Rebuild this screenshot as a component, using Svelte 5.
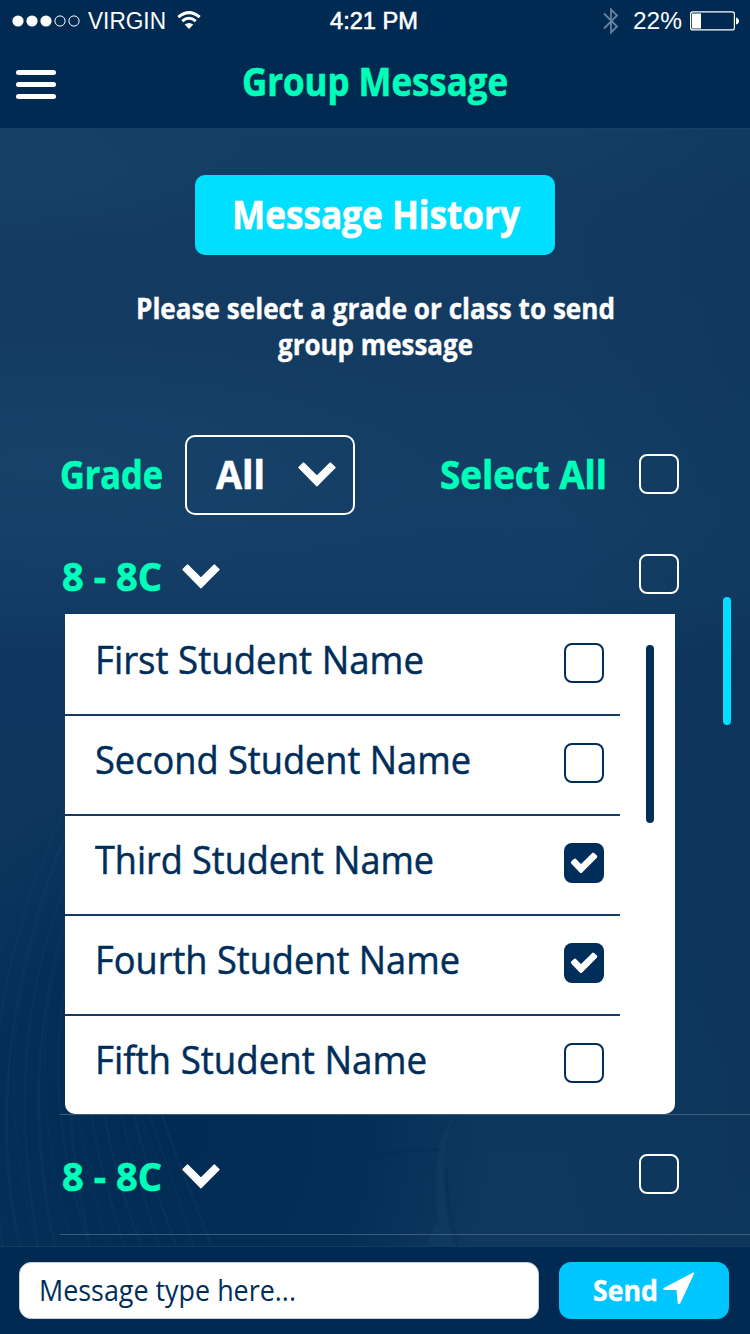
<script>
  let students = $state([
    { name: 'First Student Name', width: 329, checked: false },
    { name: 'Second Student Name', width: 376, checked: false },
    { name: 'Third Student Name', width: 339, checked: true },
    { name: 'Fourth Student Name', width: 365, checked: true },
    { name: 'Fifth Student Name', width: 332, checked: false }
  ]);
  const strands = Array.from({ length: 18 }, (_, i) => i);
</script>

{#snippet label(text, width, kind)}
  <svg class="label {kind}" style:width="{width}px" role="img" aria-label={text}>
    <text x="0" y={kind.includes('small') ? 24 : 30} textLength={width} lengthAdjust="spacingAndGlyphs">{text}</text>
  </svg>
{/snippet}

{#snippet chevron()}
  <svg class="chevron" viewBox="0 0 38 25" width="38" height="25">
    <path d="M5.5 1 1 5.4 18.9 23.8 37 5.4 32.3 1 18.9 14.2Z" fill="#fff" stroke="#fff" stroke-width="1.4" stroke-linejoin="round" />
  </svg>
{/snippet}

{#snippet groupRow(extra)}
  <div class="group-row {extra}">
    {@render label('8 - 8C', 100, 'bold')}
    {@render chevron()}
    <button class="box light" aria-label="Select class"></button>
  </div>
{/snippet}

<div class="screen">
  <header>
    <div class="status">
      <svg class="signal" viewBox="0 0 68 12" width="68" height="12">
        <g fill="#fff"><circle cx="6" cy="6" r="5.6" /><circle cx="20" cy="6" r="5.6" /><circle cx="34" cy="6" r="5.6" /></g>
        <g fill="none" stroke="#fff"><circle cx="48" cy="6" r="5.1" /><circle cx="62" cy="6" r="5.1" /></g>
      </svg>
      <svg class="stat carrier" width="78" height="26"><text y="21" textLength="78" lengthAdjust="spacingAndGlyphs">VIRGIN</text></svg>
      <svg class="wifi" viewBox="0 0 24 19" width="24" height="19">
        <g fill="none" stroke="#fff" stroke-width="3">
          <path d="M1.3 6.2Q12-3 22.7 6.2" /><path d="M5.2 10.2Q12 4.4 18.8 10.2" />
        </g>
        <path d="M7.7 13.6Q12 10.2 16.3 13.6L12 18Z" fill="#fff" />
      </svg>
      <svg class="stat time" width="88" height="26"><text y="21" textLength="88" lengthAdjust="spacingAndGlyphs">4:21 PM</text></svg>
      <svg class="bluetooth" viewBox="0 0 16 28" width="16" height="28">
        <path d="M1 6.5 14 19.5 8 25.5V2.5L14 8.5 1 21.5" fill="none" stroke="#6a829b" stroke-width="1.8" />
      </svg>
      <svg class="stat percent" width="49" height="26"><text y="21" textLength="49" lengthAdjust="spacingAndGlyphs">22%</text></svg>
      <svg class="battery" viewBox="0 0 50 20" width="50" height="20">
        <rect x=".6" y=".9" width="43.8" height="18" rx="2.2" fill="none" stroke="#fff" stroke-width="1.2" />
        <rect x="2" y="2.5" width="9" height="15" fill="#fff" />
        <path d="M46 6.5Q49 7.5 49 10T46 13.5Z" fill="#fff" />
      </svg>
    </div>
    <div class="nav">
      <button class="menu" aria-label="Menu"><i></i><i></i><i></i></button>
      <h1>{@render label('Group Message', 266, 'bold')}</h1>
    </div>
  </header>

  <main>
    <svg class="backdrop" viewBox="0 0 750 1117" width="750" height="1117" aria-hidden="true">
      <defs>
        <linearGradient id="tone" x1="0" y1="0" x2="0" y2="1">
          <stop offset="0" stop-color="#143e64" /><stop offset=".1" stop-color="#133a61" />
          <stop offset=".35" stop-color="#143e65" /><stop offset=".42" stop-color="#133c64" />
          <stop offset=".47" stop-color="#0e365e" /><stop offset="1" stop-color="#0f385e" />
        </linearGradient>
        <radialGradient id="shade"><stop offset="0" stop-color="#002c54" /><stop offset=".6" stop-color="#002c54" stop-opacity=".8" /><stop offset="1" stop-color="#002c54" stop-opacity="0" /></radialGradient>
        <radialGradient id="glow"><stop offset="0" stop-color="#1c4a70" stop-opacity=".35" /><stop offset="1" stop-color="#1c4a70" stop-opacity="0" /></radialGradient>
        <linearGradient id="edge" x1="0" y1="0" x2="1" y2="0"><stop offset="0" stop-color="#0b3358" stop-opacity="0" /><stop offset="1" stop-color="#0b3358" /></linearGradient>
      </defs>
      <rect width="750" height="1117" fill="url(#tone)" />
      <rect x="560" width="190" height="1117" fill="url(#edge)" opacity=".35" />
      <ellipse cx="20" cy="50" rx="260" ry="90" fill="url(#glow)" />
      <ellipse cx="60" cy="330" rx="420" ry="130" fill="url(#glow)" />
      <ellipse cx="180" cy="1000" rx="310" ry="370" fill="url(#shade)" />
      <g fill="none" stroke="#1c486d" opacity=".2">
        {#each strands as i}
          <path stroke-width={1 + (i % 3) * 0.9} d="M{i * 13 - 14 + (i % 4) * 4} 1117C{i * 12 - 26} {1010 + (i % 3) * 6} {i * 9 - 40 + (i % 3) * 8} {850 + i * 5} {i * 5 + 72} {640 + i * 14}" />
        {/each}
      </g>
      <path d="M455 985C442 1015 439 1050 452 1117H426L438 1090C434 1065 436 1030 440 1010Z" fill="#174166" opacity=".35" />
      <path d="M375 1030Q390 1020 440 1021M447 1040Q446 1080 458 1117" fill="none" stroke="#022c53" stroke-width="2.5" opacity=".35" />
    </svg>

    <button class="history">{@render label('Message History', 288, 'bold')}</button>

    <div class="hint">
      {@render label('Please select a grade or class to send', 479, 'bold small')}
      {@render label('group message', 195, 'bold small')}
    </div>

    <div class="filters">
      {@render label('Grade', 103, 'bold')}
      <button class="select">
        {@render label('All', 49, 'bold white')}
        {@render chevron()}
      </button>
      <div class="select-all">
        {@render label('Select All', 167, 'bold')}
        <button class="box light" aria-label="Select all"></button>
      </div>
    </div>

    {@render groupRow('first')}

    <section class="panel">
      <div class="students">
        {#each students as s}
          <div class="student">
            {@render label(s.name, s.width, 'regular')}
            <button class="box dark" class:checked={s.checked} aria-label={s.name} onclick={() => (s.checked = !s.checked)}>
              {#if s.checked}
                <svg viewBox="0 0 40 40" width="40" height="40">
                  <path d="M8.6 19.5 11 17.4 17 23.4 29.2 11.4 31.6 13.6 17 28.2Z" fill="#fff" stroke="#fff" stroke-width="3.4" stroke-linejoin="round" />
                </svg>
              {/if}
            </button>
          </div>
        {/each}
      </div>
      <div class="thumb"></div>
    </section>

    {@render groupRow('second')}
    <div class="page-thumb"></div>
  </main>

  <footer>
    <div class="field">{@render label('Message type here...', 257, 'thin small')}</div>
    <button class="send">
      {@render label('Send', 65, 'bold small')}
      <svg class="arrow" viewBox="0 0 32 33" width="32" height="33">
        <path d="M30.5 1.2 1 16.5 1.2 17.4H14.2L15.4 31.4H16.4Z" fill="#fff" stroke="#fff" stroke-width="1.4" stroke-linejoin="round" />
      </svg>
    </button>
  </footer>
</div>

<style>
  :global(body) { margin: 0; background: #002a52; }
  * { box-sizing: border-box; }
  button { border: 0; padding: 0; background: none; display: flex; cursor: pointer; }
  svg { display: block; flex: none; }
  h1 { margin: 0; }
  .screen { width: 750px; height: 1334px; display: flex; flex-direction: column; overflow: hidden; background: #002a52; }

  .label { height: 40px; overflow: visible; font-family: "Open Sans", "Noto Sans", sans-serif; font-size: 39px; fill: #00ffb9; }
  .bold { font-weight: 700; stroke: #00ffb9; stroke-width: .6px; }
  .small { height: 36px; font-size: 29px; fill: #fff; }
  .white { fill: #fff; stroke: #fff; }
  .bold.small { stroke: #fff; stroke-width: .4px; }
  .regular { fill: #002e5a; stroke: #002e5a; stroke-width: .5px; }
  .thin { fill: #002e5a; font-weight: 400; }

  header { height: 129px; flex: none; border-bottom: 1px solid #1a3f66; }
  .status { height: 42px; display: flex; align-items: flex-start; padding: 8px 12px 0; }
  .signal { margin-top: 7px; }
  .stat { overflow: visible; fill: #fff; font: 23px "Liberation Sans", sans-serif; }
  .carrier { margin-left: 8px; }
  .wifi { margin: 3px 0 0 11px; }
  .time { margin-left: 129px; stroke: #fff; stroke-width: .6px; }
  .bluetooth { margin: -1px 0 0 185px; }
  .percent { margin-left: 14px; }
  .battery { margin: 3px 0 0 8px; }
  .nav { display: grid; grid-template-columns: 40px 1fr 40px; padding: 24px 16px 0; }
  .menu { flex-direction: column; gap: 7px; padding-top: 4px; }
  .menu i { width: 40px; height: 5px; border-radius: 2.5px; background: #fff; }
  h1 { display: flex; justify-content: center; }

  main { position: relative; isolation: isolate; height: 1117px; flex: none; display: flex; flex-direction: column; }
  main > * { flex: none; }
  .backdrop { position: absolute; inset: 0; z-index: -1; }
  .history { width: 360px; height: 80px; margin: 46px auto 0; padding: 24px 0 0 1px; justify-content: center; border-radius: 10px; background: #00dfff; }
  .history .label { fill: #fff; stroke: #fff; }
  .hint { display: flex; flex-direction: column; align-items: center; margin-top: 40px; }
  .filters { display: flex; height: 80px; margin: 68px 71px 0 60px; }
  .filters > .label { margin-top: 24px; }
  .select { width: 170px; height: 80px; margin-left: 22px; padding: 22px 0 0 29px; border: 2px solid #fff; border-radius: 10px; }
  .select .chevron { margin: 3px 0 0 33px; }
  .select-all { display: flex; margin-left: auto; padding-top: 19px; gap: 32px; }
  .select-all .label { margin-top: 5px; }
  .box { width: 40px; height: 40px; border-radius: 8px; border: 2px solid #fff; flex: none; }
  .box.dark { border-color: #002e5a; }
  .box.checked { background: #002e5a; border: 0; }
  .group-row { display: flex; padding: 0 71px 0 62px; }
  .group-row .box { margin-left: auto; }
  .group-row .chevron { margin: 10px 0 0 20px; }
  .group-row .label { margin-top: 7px; }
  .first { height: 60px; margin-top: 39px; }
  .second { height: 121px; margin-left: 60px; padding: 39px 71px 0 2px; border-top: 1px solid #3c5d7c; border-bottom: 1px solid #3c5d7c; }

  .panel { width: 610px; height: 500px; margin-left: 65px; padding-top: 2px; display: flex; gap: 26px; background: #fff; border-radius: 0 0 10px 10px; overflow: hidden; }
  .students { width: 555px; }
  .student { height: 100px; display: flex; justify-content: space-between; padding: 27px 16px 0 29.5px; border-bottom: 2px solid #133c65; }
  .student:last-child { border-bottom: 0; }
  .student .label { margin-top: 1px; }
  .thumb { width: 8px; height: 178px; margin-top: 29px; border-radius: 4px; background: #002e5a; }
  .page-thumb { position: absolute; left: 723px; top: 468px; width: 8px; height: 128px; border-radius: 4px; background: #00dfff; }

  footer { height: 88px; flex: none; display: flex; gap: 20px; padding: 15px 19px 0; border-top: 1px solid #173b60; }
  .field { width: 520px; height: 57px; padding: 14px 19px 0; border: 1px solid #c9cfd6; border-radius: 12px; background: #fff; }
  .send { width: 170px; height: 57px; padding: 15px 0 0 34px; border-radius: 12px; background: #00c6ff; }
  .arrow { margin: -5px 0 0 5px; }
</style>
